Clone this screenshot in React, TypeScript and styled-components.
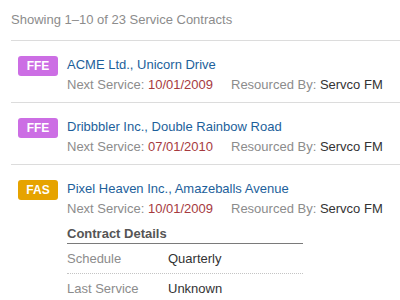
import React from 'react';
import styled, { createGlobalStyle } from 'styled-components';

const GlobalStyle = createGlobalStyle`
  html, body {
    margin: 0;
    padding: 0;
    background: #ffffff;
  }
  body {
    font-family: 'Liberation Sans', Arial, Helvetica, sans-serif;
    font-size: 13px;
    color: #333333;
    -webkit-font-smoothing: antialiased;
  }
`;

type Contract = {
  code: 'FFE' | 'FAS';
  name: string;
  nextService: string;
  resourcedBy: string;
  details?: { label: string; value: string }[];
};

const contracts: Contract[] = [
  { code: 'FFE', name: 'ACME Ltd., Unicorn Drive', nextService: '10/01/2009', resourcedBy: 'Servco FM' },
  { code: 'FFE', name: 'Dribbbler Inc., Double Rainbow Road', nextService: '07/01/2010', resourcedBy: 'Servco FM' },
  {
    code: 'FAS',
    name: 'Pixel Heaven Inc., Amazeballs Avenue',
    nextService: '10/01/2009',
    resourcedBy: 'Servco FM',
    details: [
      { label: 'Schedule', value: 'Quarterly' },
      { label: 'Last Service', value: 'Unknown' },
    ],
  },
];

const App = () => (
  <>
    <GlobalStyle />
    <Page>
      <Summary>Showing 1–10 of 23 Service Contracts</Summary>
      <List>
        {contracts.map((c, i) => (
          <Row key={i} $last={i === contracts.length - 1}>
            <Badge $kind={c.code}>{c.code}</Badge>
            <Body>
              <Title href="#">{c.name}</Title>
              <Meta>
                <span>
                  Next Service: <DateText>{c.nextService}</DateText>
                </span>
                <span>
                  Resourced By: <Value>{c.resourcedBy}</Value>
                </span>
              </Meta>
              {c.details && (
                <Details>
                  <DetailsHeading>Contract Details</DetailsHeading>
                  {c.details.map((d, j) => (
                    <DetailRow key={d.label} $last={j === c.details!.length - 1}>
                      <DetailLabel>{d.label}</DetailLabel>
                      <Value>{d.value}</Value>
                    </DetailRow>
                  ))}
                </Details>
              )}
            </Body>
          </Row>
        ))}
      </List>
    </Page>
  </>
);

export default App;

const Page = styled.div`
  padding-left: 11px;
  height: 300px;
  overflow: hidden;
`;

const Summary = styled.div`
  height: 41px;
  box-sizing: border-box;
  padding-top: 12px;
  line-height: 16px;
  color: #8c8c8c;
  font-size: 13px;
  border-bottom: 1px solid #dcdcdc;
`;

const List = styled.div`
  display: flex;
  flex-direction: column;
`;

const Row = styled.div<{ $last?: boolean }>`
  display: flex;
  align-items: flex-start;
  padding: 14px 0 7px 7px;
  border-bottom: ${({ $last }) => ($last ? 'none' : '1px solid #dcdcdc')};
`;

const Badge = styled.div<{ $kind: 'FFE' | 'FAS' }>`
  flex: none;
  width: 40px;
  height: 20px;
  margin-top: 1px;
  border-radius: 3px;
  background: ${({ $kind }) => ($kind === 'FFE' ? '#cc6ee4' : '#e6a300')};
  color: #ffffff;
  font-weight: bold;
  font-size: 12px;
  line-height: 20px;
  text-align: center;
`;

const Body = styled.div`
  margin-left: 9px;
  display: flex;
  flex-direction: column;
`;

const Title = styled.a`
  color: #1d5f9b;
  text-decoration: none;
  line-height: 20px;
`;

const Meta = styled.div`
  display: flex;
  gap: 18px;
  line-height: 20px;
  color: #8c8c8c;
`;

const DateText = styled.span`
  color: #a63a3e;
`;

const Value = styled.span`
  color: #333333;
`;

const Details = styled.div`
  margin-top: 5px;
  width: 236px;
`;

const DetailsHeading = styled.div`
  font-weight: bold;
  color: #555555;
  line-height: 19px;
  border-bottom: 1px solid #7a7a7a;
`;

const DetailRow = styled.div<{ $last?: boolean }>`
  display: flex;
  height: 29px;
  align-items: center;
  border-bottom: ${({ $last }) => ($last ? 'none' : '1px dotted #c4c4c4')};
`;

const DetailLabel = styled.span`
  width: 101px;
  flex: none;
  color: #8c8c8c;
`;
